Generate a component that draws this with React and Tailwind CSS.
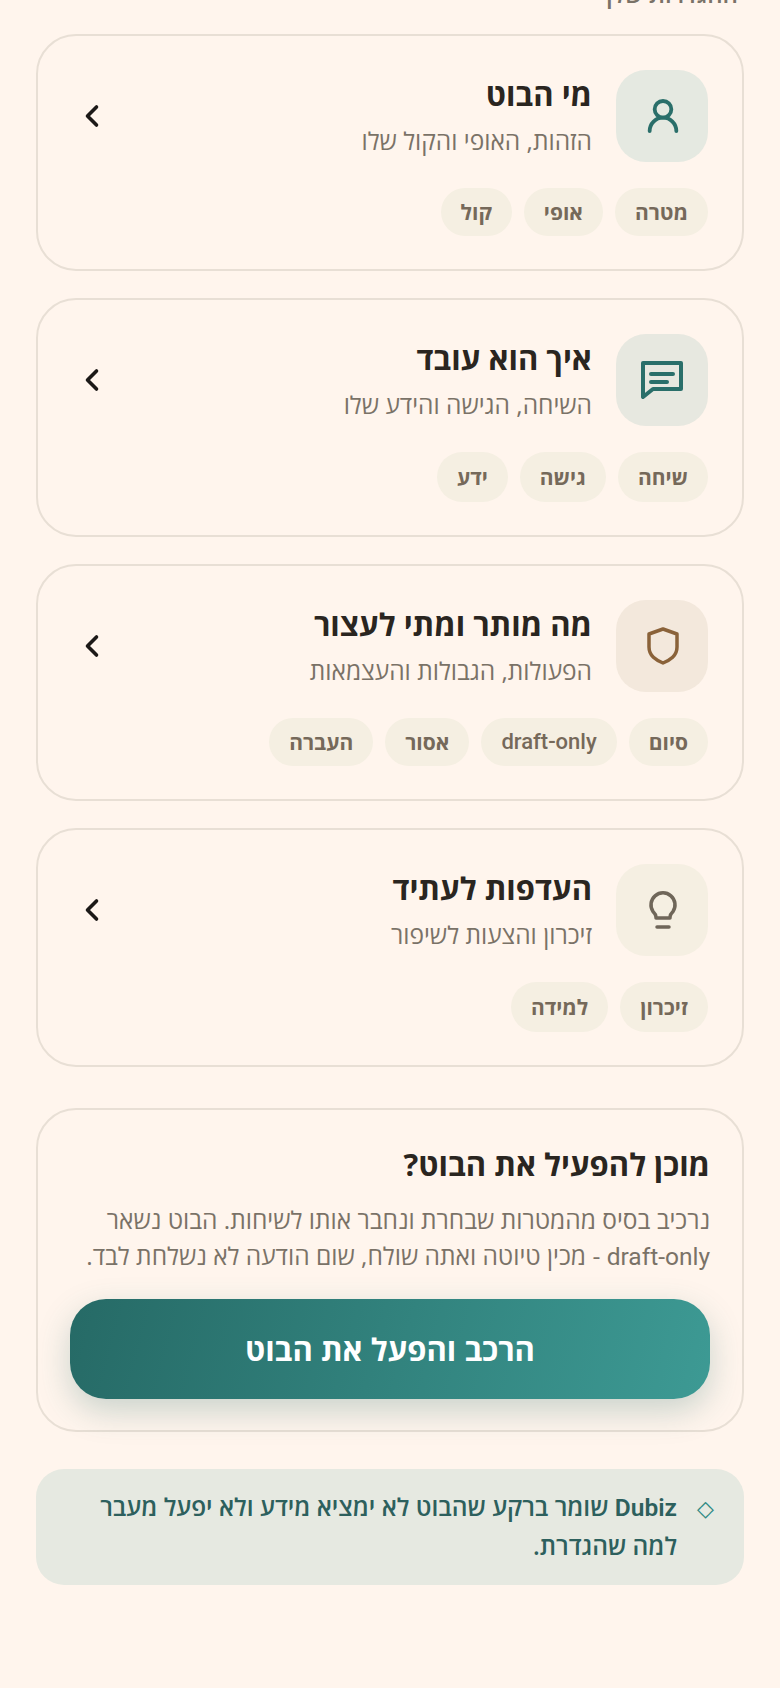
import { ChevronLeft, UserRound } from 'lucide-react'

const SECTIONS = [
  { title: 'מי הבוט', sub: 'הזהות, האופי והקול שלו', chips: ['מטרה', 'אופי', 'קול'], icon: 'user', tint: 'bg-[#e5e9e1]' },
  { title: 'איך הוא עובד', sub: 'השיחה, הגישה והידע שלו', chips: ['שיחה', 'גישה', 'ידע'], icon: 'chat', tint: 'bg-[#e7e8e0]', tall: true },
  { title: 'מה מותר ומתי לעצור', sub: 'הפעולות, הגבולות והעצמאות', chips: ['סיום', 'draft-only', 'אסור', 'העברה'], icon: 'shield', tint: 'bg-[#f3e8dc]' },
  { title: 'העדפות לעתיד', sub: 'זיכרון והצעות לשיפור', chips: ['זיכרון', 'למידה'], icon: 'bulb', tint: 'bg-[#f5efe2]', tall: true }
]

function ChatIcon() {
  return (
    <svg width="44" height="44" viewBox="0 0 44 44" fill="none" stroke="#2a6f6a" strokeWidth="4" strokeLinecap="round" strokeLinejoin="round">
      <path d="M3 5h38v26H13L3 39z" />
      <path d="M11 16h22M11 24h16" />
    </svg>
  )
}

function ShieldIcon() {
  return (
    <svg width="40" height="40" viewBox="0 0 40 40" fill="none" stroke="#8a6239" strokeWidth="3.500" strokeLinejoin="round" className="ml-[2px]">
      <path d="M20 3 34 8v13c0 9-7 13-14 16-7-3-14-7-14-16V8z" />
    </svg>
  )
}

function BulbIcon() {
  return (
    <svg width="40" height="40" viewBox="0 0 40 40" fill="none" stroke="#6f6659" strokeWidth="3.500" strokeLinecap="round" strokeLinejoin="round" className="ml-[2px]">
      <path d="M13 28v-1c0-2-1-3.500-3-5.500a12 12 0 1 1 20 0c-2 2-3 3.500-3 5.500v1z" />
      <path d="M14 37h12" />
    </svg>
  )
}

function SectionIcon({ name }) {
  if (name === 'user') return <UserRound size={40} strokeWidth={2.3} className="ml-[2px] text-[#2a6f6a]" />
  if (name === 'chat') return <ChatIcon />
  if (name === 'shield') return <ShieldIcon />
  return <BulbIcon />
}

function SectionCard({ section }) {
  return (
    <div className="rounded-[40px] border-2 border-[#e8dfd5] p-[34px] pb-[33px]">
      <div className="flex items-center gap-6">
        <div className={`flex h-[92px] w-[92px] shrink-0 items-center justify-center rounded-[30px] ${section.tint}`}>
          <SectionIcon name={section.icon} />
        </div>
        <div className="min-w-0 flex-1 pt-[1px]">
          <div className="text-[31px] font-bold leading-[44px] text-[#2a2520]">{section.title}</div>
          <div className="mt-[4px] text-[24.500px] leading-[42px] text-[#7a7267]">{section.sub}</div>
        </div>
        <ChevronLeft size={36} strokeWidth={2.4} className="ml-[2px] shrink-0 text-[#1c1917]" />
      </div>
      <div className="mt-[26px] flex gap-3">
        {section.chips.map((chip) => (
          <span
            key={chip}
            className={`rounded-full bg-[#f5efe2] px-5 leading-[36px] text-[#75695a] ${section.tall ? 'py-[7px]' : 'py-[6px]'} ${chip === 'draft-only' ? "font-['Roboto',sans-serif] text-[22px] font-medium" : 'text-[21px] font-bold'}`}
          >
            {chip}
          </span>
        ))}
      </div>
    </div>
  )
}

export default function App() {
  return (
    <div dir="rtl" className="h-[1688px] overflow-hidden bg-[#fff5ed] px-9 font-['Open_Sans','Noto_Sans',sans-serif]">
      <div className="-mt-[23px] mr-[6px] text-[24px] font-semibold leading-[34px] text-[#7a7267]">ההגדרות שלך</div>
      <div className="mt-[23px] flex flex-col gap-[27px]">
        {SECTIONS.map((section) => (
          <SectionCard key={section.title} section={section} />
        ))}
      </div>

      <div className="mt-[41px] rounded-[40px] border-2 border-[#e8dfd5] px-[32px] pt-[32px] pb-[31px]">
        <h2 className="text-[31px] font-bold leading-[44px] text-[#2a2520]">מוכן להפעיל את הבוט?</h2>
        <p className="mt-[16px] text-[24.500px] leading-[36px] text-[#7a7267]">
          נרכיב בסיס מהמטרות שבחרת ונחבר אותו לשיחות. הבוט נשאר <span className="font-['Roboto',sans-serif]">draft-only</span> - מכין טיוטה ואתה שולח, שום הודעה לא נשלחת לבד.
        </p>
        <button className="mt-[24px] h-[100px] w-full rounded-[36px] bg-[linear-gradient(105deg,#266a66,#3d9a94)] text-[31px] font-bold text-white shadow-[0_12px_32px_rgba(42,111,106,0.25)]">
          הרכב והפעל את הבוט
        </button>
      </div>

      <div className="mt-[37px] flex gap-5 rounded-[28px] bg-[#e6e9e1] pt-[19px] pb-[20px] pl-[24px] pr-[30px]">
        <span className="text-[22px] leading-[38px] text-[#2f8a83]">◇</span>
        <p className="text-[24.500px] font-semibold leading-[38px] text-[#2d605d]">
          <span className="font-['Roboto',sans-serif]">Dubiz</span> שומר ברקע שהבוט לא ימציא מידע ולא יפעל מעבר למה שהגדרת.
        </p>
      </div>
    </div>
  )
}
